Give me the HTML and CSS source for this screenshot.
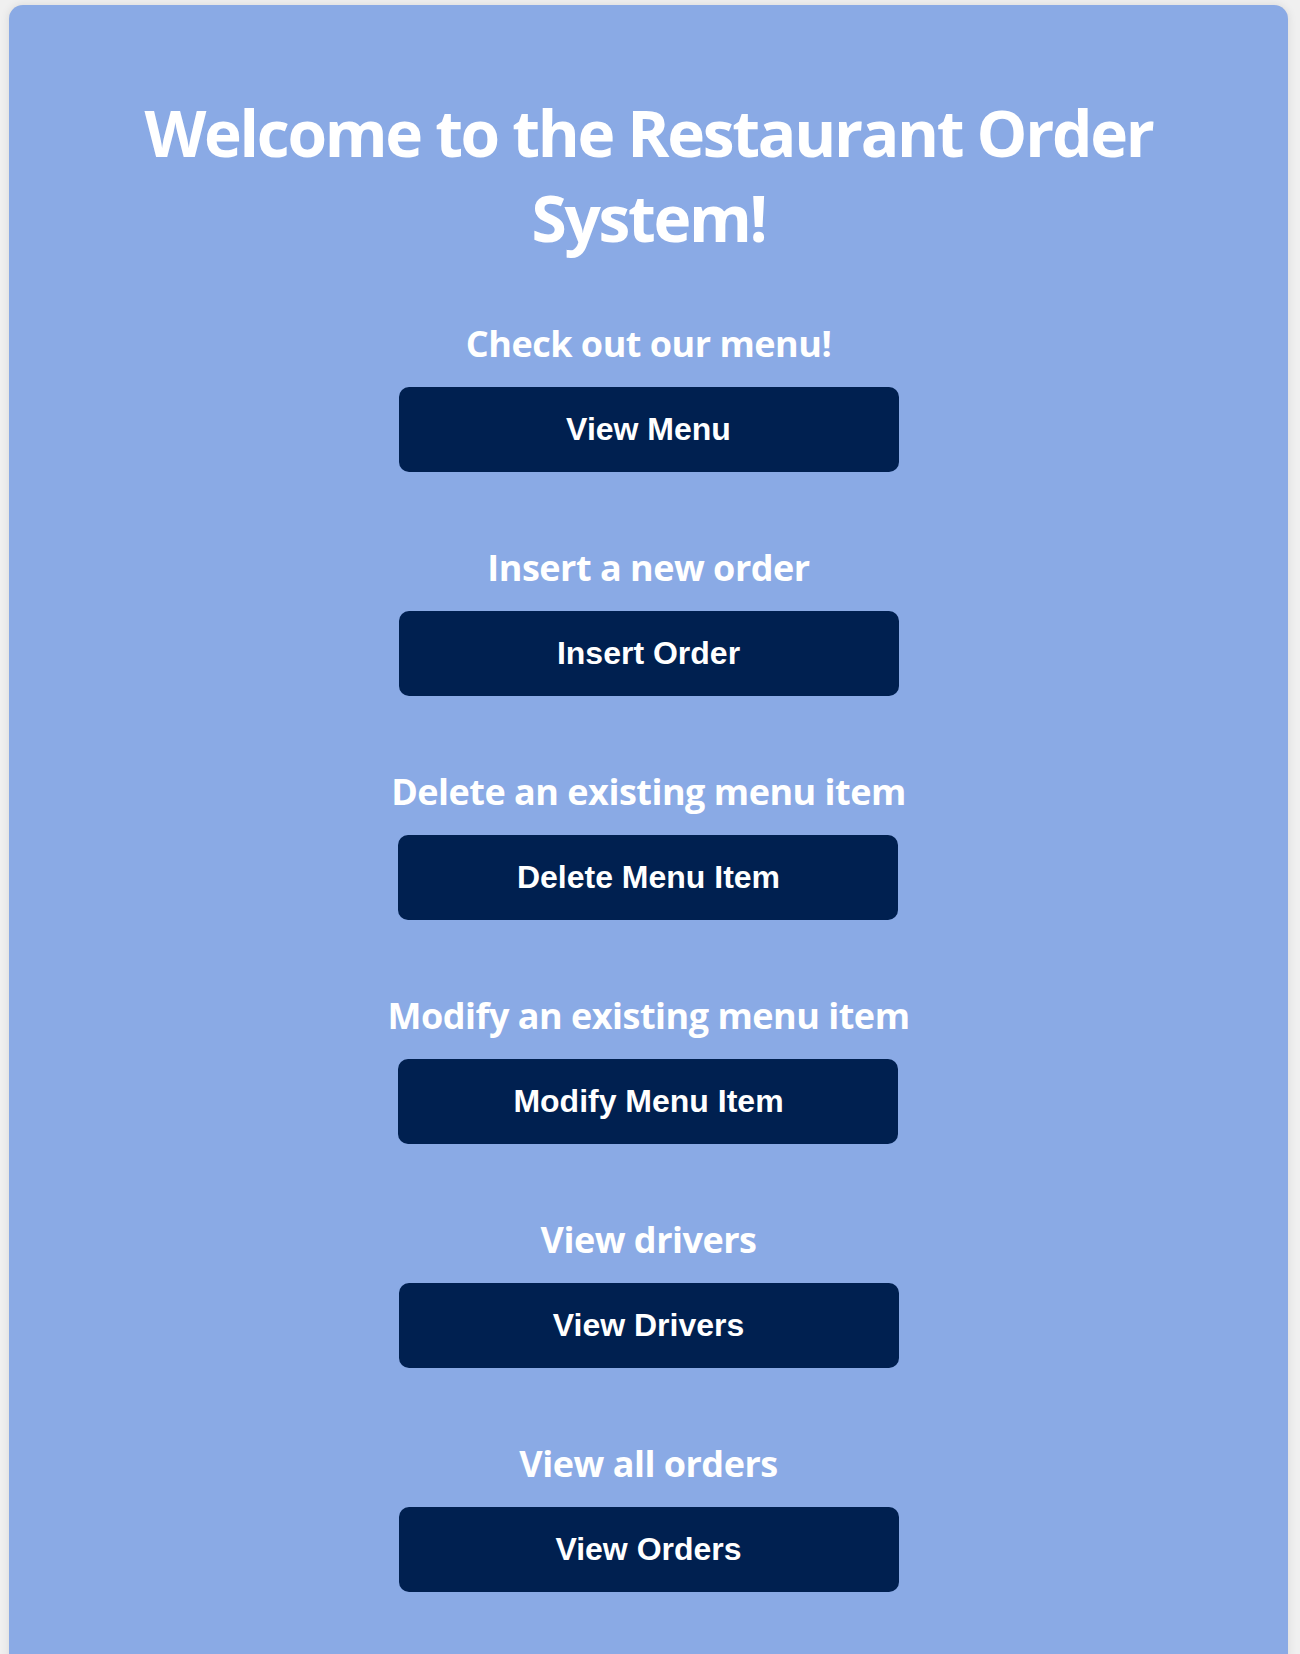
FILE: index.html
```html
<!DOCTYPE html>
<html lang="en">
<head>
<meta charset="utf-8">
<title>Restaurant Order System</title>
<link rel="stylesheet" href="styles.css">
</head>
<body>
<div class="container">
  <h1 class="title">Welcome to the Restaurant Order System!</h1>
  <div class="sections">
    <div class="section">
      <h2 class="label">Check out our menu!</h2>
      <button class="btn">View Menu</button>
    </div>
    <div class="section">
      <h2 class="label">Insert a new order</h2>
      <button class="btn">Insert Order</button>
    </div>
    <div class="section">
      <h2 class="label">Delete an existing menu item</h2>
      <button class="btn">Delete Menu Item</button>
    </div>
    <div class="section">
      <h2 class="label">Modify an existing menu item</h2>
      <button class="btn">Modify Menu Item</button>
    </div>
    <div class="section">
      <h2 class="label">View drivers</h2>
      <button class="btn">View Drivers</button>
    </div>
    <div class="section">
      <h2 class="label">View all orders</h2>
      <button class="btn">View Orders</button>
    </div>
  </div>
</div>
</body>
</html>
```
FILE: styles.css
```css
html, body {
  margin: 0;
  padding: 0;
  background: #f0f0f0;
}
body {
  font-family: "Open Sans", "Noto Sans", sans-serif;
}
.container {
  margin: 5px 12px 0 9px;
  padding: 85px 40px 80px;
  background: #8aaae5;
  border-radius: 14px;
  box-shadow: 0 0 10px rgba(0, 0, 0, 0.1);
  text-align: center;
  color: #ffffff;
}
.title {
  margin: 0 auto;
  max-width: 1100px;
  font-size: 64px;
  line-height: 85px;
  font-weight: 700;
  letter-spacing: -2.3px;
}
.sections {
  margin-top: 60px;
  display: flex;
  flex-direction: column;
  align-items: center;
  gap: 72px;
}
.section {
  display: flex;
  flex-direction: column;
  align-items: center;
  gap: 19px;
}
.label {
  margin: 0;
  font-size: 36px;
  line-height: 48px;
  font-weight: 700;
  letter-spacing: -0.5px;
}
.btn {
  width: 500px;
  height: 85px;
  padding: 0;
  border: none;
  border-radius: 10px;
  background: #002050;
  color: #ffffff;
  font-family: "Liberation Sans", Arial, sans-serif;
  font-size: 32px;
  font-weight: 700;
  cursor: pointer;
}
```
